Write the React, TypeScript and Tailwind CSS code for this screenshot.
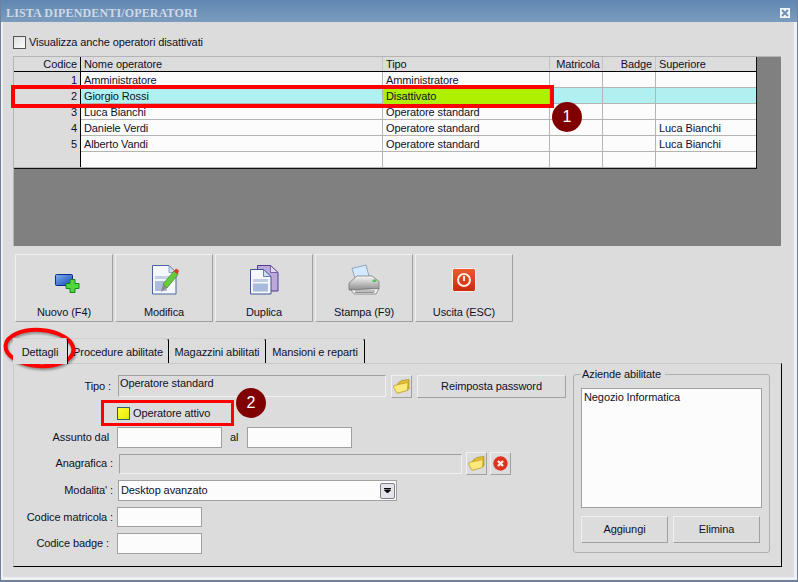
import React from "react";

const NewIcon = () => (
  <svg width="32" height="32" viewBox="0 0 32 32">
    <defs>
      <linearGradient id="nw" x1="0" y1="0" x2="1" y2="1">
        <stop offset="0" stopColor="#7fb0f0" />
        <stop offset="1" stopColor="#1646b4" />
      </linearGradient>
    </defs>
    <rect x="7.5" y="10.5" width="17" height="11" rx="1" fill="url(#nw)" stroke="#0c2c8c" />
    <path d="M22 15.5h5v4h4v5h-4v4h-5v-4h-4v-5h4z" fill="#4fd83c" stroke="#128a1c" />
  </svg>
);

const EditIcon = () => (
  <svg width="32" height="32" viewBox="0 0 32 32">
    <path d="M4.5 1.5h16.5l7 7v21.500h-23.500z" fill="#f4f7fc" stroke="#4a64a0" />
    <path d="M21 1.500v7h7z" fill="#cfdcf0" stroke="#6a82b4" strokeWidth="0.7" />
    <rect x="7" y="12" width="18" height="3" fill="#c6d0e6" />
    <rect x="7" y="17" width="12" height="10" fill="#aebcdc" />
    <path d="M15 20L26 7l4 3.500-11 13.500z" fill="#66cc3e" stroke="#2f8a1e" strokeWidth="0.7" />
    <path d="M15 20l4 4-6 4z" fill="#8c8c7c" />
    <path d="M25.500 7.500l2.500-3 3 2-1 3.500z" fill="#d83e2a" />
  </svg>
);

const DupIcon = () => (
  <svg width="32" height="32" viewBox="0 0 32 32">
    <path d="M9.500 1.500h13l7.500 7v18.500h-20.500z" fill="#bba9dc" stroke="#4b3c8c" />
    <path d="M22.500 1.500v7h7.500z" fill="#e4daf4" stroke="#4b3c8c" strokeWidth="0.7" />
    <path d="M2.500 5.500h13l7.500 7v17.500h-20.500z" fill="#f4f7fc" stroke="#3a5496" />
    <path d="M15.500 5.500v7h7.500z" fill="#cfdcf0" stroke="#3a5496" strokeWidth="0.7" />
    <rect x="5" y="15" width="15" height="3" fill="#c0cce6" />
    <rect x="5" y="19.500" width="15" height="8" fill="#a9bade" />
  </svg>
);

const PrinterIcon = () => (
  <svg width="32" height="32" viewBox="0 0 32 32">
    <defs>
      <linearGradient id="pr" x1="0" y1="0" x2="0" y2="1">
        <stop offset="0" stopColor="#f8f8f8" />
        <stop offset="1" stopColor="#8e8e8e" />
      </linearGradient>
    </defs>
    <path d="M4 4.500L18 1l3.500 13-13 5z" fill="#d4eaff" stroke="#6e8ca4" strokeWidth="0.7" />
    <path d="M1 19l8-7h15l7 5.500v7l-30 1.500z" fill="url(#pr)" stroke="#6e6e6e" strokeWidth="0.7" />
    <path d="M3 26l28-1.500-3 5.500H6z" fill="#f0f0f0" stroke="#6e6e6e" strokeWidth="0.7" />
    <path d="M7 27h20M7 28.500h19" stroke="#666666" strokeWidth="0.7" />
    <rect x="24.500" y="15.500" width="4" height="2.500" rx="1" fill="#46c84a" />
  </svg>
);

const ExitIcon = () => (
  <svg width="32" height="32" viewBox="0 0 32 32">
    <defs>
      <linearGradient id="ex" x1="0" y1="0" x2="0" y2="1">
        <stop offset="0" stopColor="#ec5c30" />
        <stop offset="1" stopColor="#c8280c" />
      </linearGradient>
    </defs>
    <rect x="4.500" y="4.500" width="23" height="23" rx="2" fill="url(#ex)" stroke="#f8f0ea" />
    <circle cx="16" cy="16" r="6" fill="none" stroke="#fcebe2" strokeWidth="2" />
    <rect x="15" y="12" width="2" height="5" fill="#fcebe2" />
  </svg>
);

const FolderIcon = () => (
  <svg width="17" height="15" viewBox="0 0 17 15">
    <path d="M5 4l4-2.500 7-1v9.500l-11 3.500z" fill="#e6c036" stroke="#a8891a" strokeWidth="0.7" />
    <path d="M0.800 6.500L12.500 4l2.500-.5-.5 8L4 14.300 0.800 8.500z" fill="#fbe97c" stroke="#b8951c" strokeWidth="0.7" />
  </svg>
);

const ClearIcon = () => (
  <svg width="15" height="15" viewBox="0 0 15 15">
    <circle cx="7.500" cy="7.500" r="7.200" fill="#e2301e" />
    <path d="M5 5l5 5M10 5l-5 5" stroke="#fdeee8" strokeWidth="2.400" />
  </svg>
);

const raised = "border border-t-[#f0f0f0] border-l-[#f0f0f0] border-r-[#a0a0a0] border-b-[#a0a0a0] bg-[#dcdcdc]";
const field = "border border-[#a0a0a0] bg-[#fcfcfc]";
const sunken = "border border-t-[#a0a0a0] border-l-[#a0a0a0] border-r-[#f0f0f0] border-b-[#f0f0f0] bg-[#dcdcdc]";

const Toolbar = ({ label, icon }: { label: string; icon: React.ReactNode }) => (
  <div className={`${raised} w-[98px] h-[68px] pt-[9px] flex flex-col items-center`}>
    {icon}
    <div className="mt-[9px] leading-[14px]">{label}</div>
  </div>
);

const rows = [
  { id: 1, name: "Amministratore", type: "Amministratore", sup: "" },
  { id: 2, name: "Giorgio Rossi", type: "Disattivato", sup: "", off: true },
  { id: 3, name: "Luca Bianchi", type: "Operatore standard", sup: "" },
  { id: 4, name: "Daniele Verdi", type: "Operatore standard", sup: "Luca Bianchi" },
  { id: 5, name: "Alberto Vandi", type: "Operatore standard", sup: "Luca Bianchi" },
  { id: 0, name: "", type: "", sup: "" },
];

const cols = "grid grid-cols-[66px_1px_301px_1px_166px_1px_52px_1px_52px_1px_100px]";

const Grid = () => (
  <div className="w-[768px] h-[190px] bg-[#808080] border-t border-l border-[#b4b4b4]">
    <div className="w-[743px] border-r border-b border-[#101010] bg-white">
      <div className={`${cols} h-[15px] bg-[#dcdcdc] border-b border-black leading-[14px]`}>
        <div className="text-right pr-[3px]">Codice</div>
        <div className="bg-black" />
        <div className="pl-[3px]">Nome operatore</div>
        <div className="bg-[#c4c4c4]" />
        <div className="pl-[3px]">Tipo</div>
        <div className="bg-[#c4c4c4]" />
        <div className="text-center pl-[4px]">Matricola</div>
        <div className="bg-[#c4c4c4]" />
        <div className="text-right pr-[3px]">Badge</div>
        <div className="bg-[#c4c4c4]" />
        <div className="pl-[3px]">Superiore</div>
      </div>
      {rows.map((r) => (
        <div
          key={r.name + r.id}
          className={`${cols} h-[16px] border-b border-[#b4b4b4] leading-[16px] ${r.off ? "bg-[#b0f0f0]" : "bg-[#fcfcfc]"}`}
        >
          <div className="bg-[#dcdcdc] text-right pr-[3px]">{r.id || ""}</div>
          <div className="bg-black" />
          <div className="pl-[3px]">{r.name}</div>
          <div className="bg-[#b4b4b4]" />
          <div className={`pl-[3px] ${r.off ? "bg-[#aef000]" : ""}`}>{r.type}</div>
          <div className="bg-[#b4b4b4]" />
          <div />
          <div className="bg-[#b4b4b4]" />
          <div />
          <div className="bg-[#b4b4b4]" />
          <div className="pl-[3px]">{r.sup}</div>
        </div>
      ))}
    </div>
  </div>
);

const Tab = ({ label, w, active }: { label: string; w: string; active?: boolean }) => (
  <div
    className={`${w} ${active ? "h-[26px] relative z-10 bg-[#dcdcdc]" : "h-[25px]"} border-t border-[#cfcfd8] border-r border-r-black rounded-tr-[3px] flex items-start pt-[6px] justify-center leading-[14px] whitespace-nowrap`}
  >
    {label}
  </div>
);

const Label = ({ text, w }: { text: string; w: string }) => (
  <div className={`${w} text-right whitespace-nowrap`}>{text}</div>
);

const Details = () => (
  <div className="w-[769px] h-[204px] border-t border-l border-t-[#c8c8c8] border-l-[#c8c8c8] border-b border-r border-b-black border-r-black flex">
    <div className="w-[559px] shrink-0 flex flex-col">
      <div className="flex items-center mt-[11px] h-[23px]">
        <Label text="Tipo :" w="w-[97px]" />
        <div className={`${sunken} self-start ml-[7px] w-[268px] h-[22px] pl-[1px] leading-[15px]`}>Operatore standard</div>
        <div className={`${raised} ml-[5px] w-[21px] h-[23px] flex items-center justify-center`}><FolderIcon /></div>
        <div className={`${raised} ml-[5px] w-[149px] h-[23px] flex items-center justify-center`}>Reimposta password</div>
      </div>
      <div className="flex items-center mt-[9px] ml-[103px] h-[13px]">
        <div className="w-[13px] h-[13px] border border-[#2b5c7c] bg-gradient-to-br from-[#ffff30] to-[#e8e800]" />
        <div className="ml-[3px]">Operatore attivo</div>
      </div>
      <div className="flex items-center mt-[7px] h-[21px]">
        <Label text="Assunto dal" w="w-[95px]" />
        <div className={`${field} ml-[8px] w-[105px] h-[21px]`} />
        <div className="ml-[8px] w-[17px]">al</div>
        <div className={`${field} w-[105px] h-[21px]`} />
      </div>
      <div className="flex items-center mt-[4px] h-[23px]">
        <Label text="Anagrafica :" w="w-[99px]" />
        <div className={`${sunken} ml-[6px] w-[343px] h-[20px] mt-[1px]`} />
        <div className={`${raised} ml-[4px] w-[21px] h-[23px] flex items-center justify-center`}><FolderIcon /></div>
        <div className={`${raised} ml-[3px] w-[21px] h-[23px] flex items-center justify-center`}><ClearIcon /></div>
      </div>
      <div className="flex items-center mt-[5px] h-[21px]">
        <Label text="Modalita' :" w="w-[99px]" />
        <div className={`${field} ml-[5px] w-[279px] h-[21px] flex items-center justify-between pl-[2px] pr-[1px]`}>
          <span>Desktop avanzato</span>
          <div className="w-[15px] h-[16px] border border-[#808088] rounded-[2px] bg-[#e4e4ea] flex items-center justify-center">
            <svg width="9" height="6" viewBox="0 0 9 6"><path d="M1 0.500h7M1.500 2l3 3 3-3z" fill="#000" stroke="#000" /></svg>
          </div>
        </div>
      </div>
      <div className="flex items-center mt-[6px] h-[20px]">
        <Label text="Codice matricola :" w="w-[99px]" />
        <div className={`${field} ml-[4px] w-[85px] h-[20px]`} />
      </div>
      <div className="flex items-center mt-[6px] h-[21px]">
        <Label text="Codice badge :" w="w-[95px]" />
        <div className={`${field} ml-[8px] w-[85px] h-[21px]`} />
      </div>
    </div>
    <fieldset className="mt-[4px] w-[197px] h-[185px] border border-[#b0b0b0] rounded-[3px] px-[7px]">
      <legend className="px-[1px] pr-[4px] leading-[13px]">Aziende abilitate</legend>
      <div className={`${field} mt-[7px] w-[181px] h-[120px] pl-[2px] leading-[16px]`}>Negozio Informatica</div>
      <div className="flex gap-[5px] mt-[8px]">
        <div className={`${raised} w-[87px] h-[27px] flex items-center justify-center`}>Aggiungi</div>
        <div className={`${raised} w-[87px] h-[27px] flex items-center justify-center`}>Elimina</div>
      </div>
    </fieldset>
  </div>
);

export default function App() {
  return (
    <div className="relative w-[798px] h-[582px] overflow-hidden bg-[#dcdcdc] text-[11px] tracking-[-0.1px] text-[#101028] font-['Liberation_Sans',sans-serif] border-x border-b-2 border-[#6f8298] flex flex-col">
      <div className="h-[22px] shrink-0 bg-gradient-to-b from-[#5f87b2] to-[#7c9cbe] flex items-center justify-between pt-[4px] pl-[5px] pr-[7px]">
        <span className="font-['Liberation_Serif',serif] font-bold text-[12px] text-[#cfd9e6] tracking-[0.15px]">LISTA DIPENDENTI/OPERATORI</span>
        <span className="w-[10px] h-[10px] bg-white/90 text-[#6f90b4] flex items-center justify-center">
          <svg width="8" height="8" viewBox="0 0 8 8"><path d="M1 1l6 6M7 1L1 7" stroke="currentColor" strokeWidth="2" /></svg>
        </span>
      </div>
      <div className="pl-[10px] flex-1 flex flex-col border-l-2 border-r-[3px] border-b-[3px] border-[#eef0f2]">
        <div className="flex items-center mt-[14px] h-[13px]">
          <div className="w-[13px] h-[13px] border border-[#555] bg-gradient-to-br from-[#e0e0e0] to-[#fcfcfc]" />
          <div className="ml-[3px]">Visualizza anche operatori disattivati</div>
        </div>
        <div className="mt-[7px]"><Grid /></div>
        <div className="flex gap-[2px] mt-[8px] ml-[2px]">
          <Toolbar label="Nuovo (F4)" icon={<NewIcon />} />
          <Toolbar label="Modifica" icon={<EditIcon />} />
          <Toolbar label="Duplica" icon={<DupIcon />} />
          <Toolbar label="Stampa (F9)" icon={<PrinterIcon />} />
          <Toolbar label="Uscita (ESC)" icon={<ExitIcon />} />
        </div>
        <div className="flex mt-[16px] h-[25px]">
          <Tab label="Dettagli" w="w-[55px]" active />
          <Tab label="Procedure abilitate" w="w-[101px]" />
          <Tab label="Magazzini abilitati" w="w-[97px]" />
          <Tab label="Mansioni e reparti" w="w-[99px]" />
        </div>
        <Details />
      </div>

      {/* annotazioni */}
      <div className="absolute left-[10px] top-[85px] w-[543px] h-[23px] border-[4px] border-[#ff0000]" />
      <div className="absolute left-[100px] top-[400px] w-[133px] h-[26px] border-[3px] border-[#ff0000]" />
      <div className="absolute left-[551px] top-[102px] w-[30px] h-[30px] rounded-full bg-[#800000] text-white text-[16px] flex items-center justify-center">1</div>
      <div className="absolute left-[235px] top-[388px] w-[30px] h-[30px] rounded-full bg-[#800000] text-white text-[16px] flex items-center justify-center">2</div>
      <svg className="absolute left-[0px] top-[322px] drop-shadow-[1px_2px_1px_rgba(0,0,0,0.35)]" width="84" height="54" viewBox="0 0 84 54">
        <ellipse cx="38.500" cy="26" rx="34" ry="18" fill="none" stroke="#ff0000" strokeWidth="4" transform="rotate(4 38.500 26)" />
      </svg>
    </div>
  );
}
